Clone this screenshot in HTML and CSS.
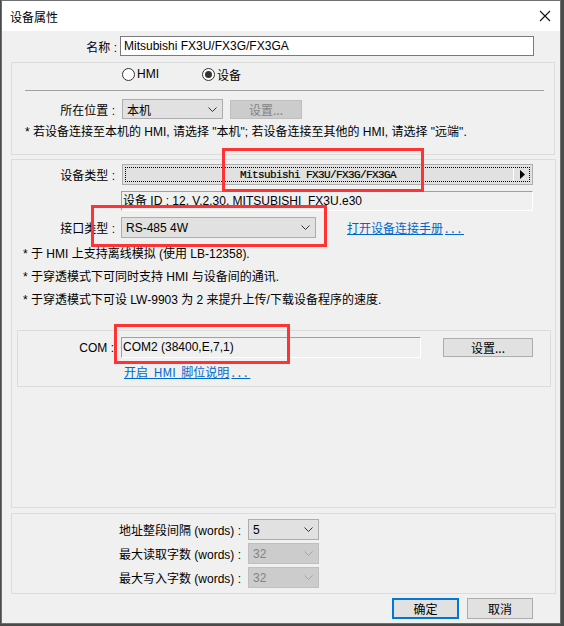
FILE: index.html
```html
<!DOCTYPE html>
<html lang="zh-CN">
<head>
    <meta charset="UTF-8">
    <title>设备属性</title>
    <link rel="stylesheet" href="styles.css">
</head>
<body>
<div class="dialog">
    <div class="titlebar">
        <span class="title">设备属性</span>
        <svg class="close" width="12" height="12" viewBox="0 0 12 12">
            <path d="M1 1L11 11M11 1L1 11" stroke="#111" stroke-width="1.1" fill="none"/>
        </svg>
    </div>

    <div class="content">
        <div class="row name-row">
            <span class="lbl lbl-name">名称 :</span>
            <div class="edit name-edit">Mitsubishi FX3U/FX3G/FX3GA</div>
        </div>

        <!-- where the device is connected -->
        <div class="group group-loc">
            <div class="radios">
                <span class="radio"><span class="circle"></span>HMI</span>
                <span class="radio checked"><span class="circle"></span>设备</span>
            </div>
            <div class="sep"></div>
            <div class="row loc-row">
                <span class="lbl lbl-loc">所在位置 :</span>
                <div class="combo loc-combo">
                    <span>本机</span>
                    <svg class="chev" width="9" height="5" viewBox="0 0 9 5"><path d="M0.5 0.5L4.5 4.5L8.5 0.5" stroke="#333" fill="none"/></svg>
                </div>
                <div class="btn btn-disabled loc-btn">设置...</div>
            </div>
            <p class="note note-loc">* 若设备连接至本机的 HMI, 请选择 "本机"; 若设备连接至其他的 HMI, 请选择 "远端".</p>
        </div>

        <!-- device type and interface -->
        <div class="group group-dev">
            <div class="row dev-row">
                <span class="lbl lbl-dev">设备类型 :</span>
                <div class="type-btn">
                    <span class="type-name">Mitsubishi FX3U/FX3G/FX3GA</span>
                    <span class="type-arrow">
                        <svg width="6" height="9" viewBox="0 0 6 9"><path d="M0 0L5 4.5L0 9Z" fill="#000"/></svg>
                    </span>
                </div>
            </div>
            <div class="static id-box">设备 ID : 12, V.2.30, MITSUBISHI&nbsp; FX3U.e30</div>
            <div class="row if-row">
                <span class="lbl lbl-if">接口类型 :</span>
                <div class="combo if-combo">
                    <span>RS-485 4W</span>
                    <svg class="chev" width="9" height="5" viewBox="0 0 9 5"><path d="M0.5 0.5L4.5 4.5L8.5 0.5" stroke="#333" fill="none"/></svg>
                </div>
                <a class="link manual-link">打开设备连接手册<span class="dots">...</span></a>
            </div>
            <p class="note">* 于 HMI 上支持离线模拟 (使用 LB-12358).</p>
            <p class="note">* 于穿透模式下可同时支持 HMI 与设备间的通讯.</p>
            <p class="note">* 于穿透模式下可设 LW-9903 为 2 来提升上传/下载设备程序的速度.</p>

            <div class="group group-com">
                <div class="row com-row">
                    <span class="lbl lbl-com">COM :</span>
                    <div class="static com-box">COM2 (38400,E,7,1)</div>
                    <div class="btn com-btn">设置...</div>
                </div>
                <a class="link pin-link">开启 HMI 脚位说明<span class="dots">...</span></a>
            </div>
        </div>

        <!-- block sizes -->
        <div class="group group-words">
            <div class="row word-row">
                <span class="lbl lbl-word">地址整段间隔 (words) :</span>
                <div class="combo word-combo">
                    <span>5</span>
                    <svg class="chev" width="9" height="5" viewBox="0 0 9 5"><path d="M0.5 0.5L4.5 4.5L8.5 0.5" stroke="#333" fill="none"/></svg>
                </div>
            </div>
            <div class="row word-row">
                <span class="lbl lbl-word">最大读取字数 (words) :</span>
                <div class="combo word-combo combo-disabled">
                    <span>32</span>
                    <svg class="chev" width="9" height="5" viewBox="0 0 9 5"><path d="M0.5 0.5L4.5 4.5L8.5 0.5" stroke="#a6a6a6" fill="none"/></svg>
                </div>
            </div>
            <div class="row word-row">
                <span class="lbl lbl-word">最大写入字数 (words) :</span>
                <div class="combo word-combo combo-disabled">
                    <span>32</span>
                    <svg class="chev" width="9" height="5" viewBox="0 0 9 5"><path d="M0.5 0.5L4.5 4.5L8.5 0.5" stroke="#a6a6a6" fill="none"/></svg>
                </div>
            </div>
        </div>

        <div class="actions">
            <div class="btn btn-default">确定</div>
            <div class="btn">取消</div>
        </div>
    </div>

    <!-- annotation marks -->
    <div class="mark mark-type"></div>
    <div class="mark mark-if"></div>
    <div class="mark mark-com"></div>
</div>
</body>
</html>
```

FILE: styles.css
```css
html, body {
    margin: 0;
    padding: 0;
}
body {
    width: 564px;
    height: 626px;
    background: #4a4a4a;
    font-family: "Liberation Sans", "Noto Sans CJK SC", sans-serif;
    font-size: 12px;
    color: #000;
    overflow: hidden;
}
.dialog {
    position: relative;
    box-sizing: border-box;
    width: 560px;
    height: 624px;
    margin-left: 1px;
    border: 1px solid #707070;
    background: #f0f0f0;
}
.titlebar {
    height: 30px;
    background: #fff;
    display: flex;
    align-items: center;
    justify-content: space-between;
    padding: 0 8px 0 8px;
}
.title {
    font-family: "Noto Sans CJK SC", sans-serif;
    font-size: 12px;
}
.close {
    margin-right: 1px;
}
.content {
    display: flex;
    flex-direction: column;
}
.row {
    display: flex;
    align-items: center;
}
.lbl {
    box-sizing: border-box;
    text-align: right;
    flex: none;
    white-space: nowrap;
}

/* name */
.name-row {
    margin-top: 5px;
    height: 20px;
}
.lbl-name {
    width: 118px;
    padding-right: 3px;
}
.edit {
    box-sizing: border-box;
    height: 20px;
    border: 1px solid #7a7a7a;
    background: #fff;
    padding: 0 3px;
    line-height: 18px;
}
.name-edit {
    width: 414px;
}

/* group boxes */
.group {
    box-sizing: border-box;
    border: 1px solid #dcdcdc;
    display: flex;
    flex-direction: column;
}
.group-loc {
    margin: 6px 0 0 9px;
    width: 544px;
    height: 93px;
}
.group-dev {
    margin: 4px 0 0 9px;
    width: 545px;
    height: 349px;
}
.group-words {
    margin: 5px 0 0 9px;
    width: 545px;
    height: 81px;
}
.group-com {
    margin: 18px 0 0 5px;
    width: 534px;
    height: 57px;
}

/* radios */
.radios {
    margin-top: 2px;
    height: 18px;
    display: flex;
    align-items: center;
    padding-left: 110px;
}
.radio {
    display: flex;
    align-items: center;
    gap: 2px;
}
.radio + .radio {
    margin-left: 43px;
}
.circle {
    box-sizing: border-box;
    width: 13px;
    height: 13px;
    border: 1px solid #333;
    border-radius: 50%;
    background: #fff;
    position: relative;
}
.radio.checked .circle::after {
    content: "";
    position: absolute;
    left: 2px;
    top: 2px;
    width: 7px;
    height: 7px;
    border-radius: 50%;
    background: #333;
}
.sep {
    margin: 7px 10px 0 13px;
    height: 1px;
    background: #a0a0a0;
}

/* combos and buttons */
.combo {
    box-sizing: border-box;
    height: 20px;
    border: 1px solid #adadad;
    background: #e1e1e1;
    display: flex;
    align-items: center;
    justify-content: space-between;
    padding: 0 5px 0 4px;
}
.combo-disabled {
    background: #cccccc;
    border-color: #bfbfbf;
    color: #838383;
}
.btn {
    box-sizing: border-box;
    height: 21px;
    border: 1px solid #adadad;
    background: #e1e1e1;
    display: flex;
    align-items: center;
    justify-content: center;
    font-family: "Noto Sans CJK SC", sans-serif;
}
.btn-disabled {
    background: #cccccc;
    border-color: #bfbfbf;
    color: #838383;
}
.btn-default {
    border: 2px solid #0078d7;
}

.loc-row {
    margin-top: 8px;
    height: 20px;
}
.lbl-loc {
    width: 110px;
    padding-right: 7px;
}
.loc-combo {
    width: 101px;
}
.loc-btn {
    margin-left: 7px;
    width: 72px;
    height: 19px;
}
.note {
    margin: 0;
    line-height: 23px;
    padding-left: 11px;
    white-space: nowrap;
}
.note-loc {
    margin-top: 2px;
    padding-left: 13px;
}

/* device type */
.dev-row {
    margin-top: 4px;
    height: 21px;
}
.lbl-dev {
    width: 110px;
    padding-right: 7px;
}
.type-btn {
    position: relative;
    box-sizing: border-box;
    width: 411px;
    height: 21px;
    border: 1px solid #adadad;
    background: #e1e1e1;
    display: flex;
    align-items: center;
}
.type-btn::after {
    content: "";
    position: absolute;
    left: 2px;
    top: 2px;
    right: 2px;
    bottom: 2px;
    border: 1px dotted #000;
}
.type-name {
    flex: 1;
    text-align: center;
    font-family: "Liberation Mono", monospace;
    font-size: 11px;
    letter-spacing: -0.6px;
    -webkit-text-stroke: 0.2px #000;
}
.type-arrow {
    box-sizing: border-box;
    width: 19px;
    height: 15px;
    border-left: 1px solid #fff;
    display: flex;
    align-items: center;
    justify-content: center;
}
.static {
    box-sizing: border-box;
    border-top: 1px solid #a0a0a0;
    border-left: 1px solid #a0a0a0;
    border-right: 1px solid #fff;
    border-bottom: 1px solid #fff;
    padding-left: 1px;
    white-space: nowrap;
}
.id-box {
    margin: 6px 0 0 109px;
    width: 412px;
    height: 20px;
    line-height: 18px;
}
.if-row {
    margin-top: 6px;
    height: 21px;
}
.lbl-if {
    width: 109px;
    padding-right: 6px;
}
.if-combo {
    width: 195px;
    height: 21px;
}
.link {
    color: #0066cc;
    text-decoration: underline;
    font-family: "Noto Sans CJK SC", sans-serif;
    white-space: nowrap;
}
.dots {
    letter-spacing: 3px;
    padding-left: 2px;
}
.manual-link {
    margin-left: 31px;
}
.if-row + .note {
    margin-top: 5px;
}

/* COM port */
.com-row {
    margin-top: 6px;
    height: 21px;
}
.lbl-com {
    width: 103px;
    padding-right: 7px;
}
.com-box {
    width: 300px;
    height: 21px;
    line-height: 19px;
}
.com-btn {
    margin-left: 22px;
    width: 90px;
    height: 19px;
}
.pin-link {
    margin: 6px 0 0 106px;
    line-height: 16px;
    align-self: flex-start;
    word-spacing: 3px;
}

/* words */
.word-row {
    margin-top: 3px;
    height: 21px;
}
.word-row:first-child {
    margin-top: 5px;
}
.lbl-word {
    width: 236px;
    padding-right: 7px;
}
.word-combo {
    width: 71px;
    height: 21px;
}

.actions {
    margin: 4px 27px 0 0;
    display: flex;
    justify-content: flex-end;
    gap: 8px;
}
.actions .btn {
    width: 66px;
}
.actions .btn-default {
    width: 67px;
}

/* red annotation rectangles drawn over the form */
.mark {
    position: absolute;
    box-sizing: border-box;
    border: 3px solid #f33;
}
.mark-type {
    left: 220px;
    top: 147px;
    width: 202px;
    height: 44px;
}
.mark-if {
    left: 89px;
    top: 204px;
    width: 236px;
    height: 42px;
}
.mark-com {
    left: 112px;
    top: 323px;
    width: 176px;
    height: 40px;
}
```
